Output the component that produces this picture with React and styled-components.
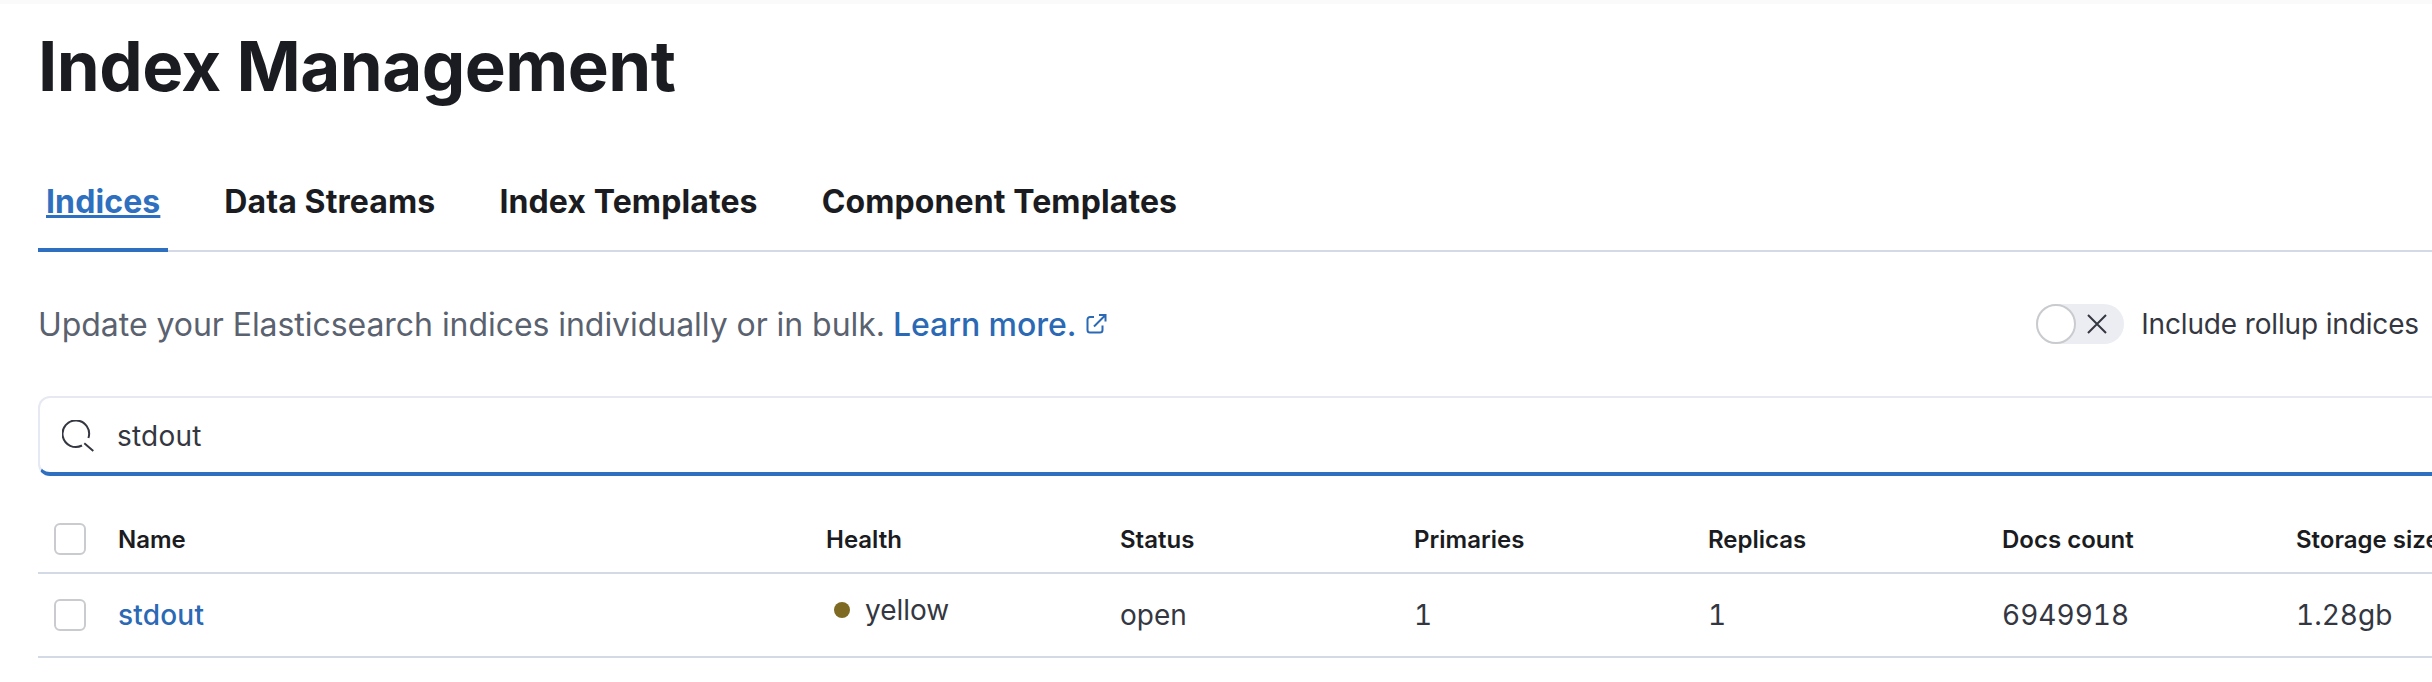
import React from "react";
import styled, { createGlobalStyle } from "styled-components";

const Global = createGlobalStyle`
  html, body { margin: 0; padding: 0; background: #fff; overflow: hidden; }
  body { font-family: Inter, "Liberation Sans", sans-serif; color: #343741; }
`;

const Page = styled.div`
  width: 2432px;
  height: 682px;
  box-sizing: border-box;
  overflow: hidden;
  padding-left: 38px;
  border-top: 4px solid #fafafa;
`;

const Title = styled.h1`
  margin: 0;
  height: 128px;
  box-sizing: border-box;
  padding-top: 22px;
  font-size: 69px;
  line-height: 80px;
  font-weight: 700;
  color: #1a1c21;
  letter-spacing: -0.55px;
`;

const Tabs = styled.div`
  display: flex;
  width: 2394px;
  height: 120px;
  box-sizing: border-box;
  align-items: flex-end;
  border-bottom: 2px solid #d3dae6;
`;

const Tab = styled.a`
  display: block;
  box-sizing: border-box;
  height: 74px;
  padding: 0 8px;
  margin-right: 48px;
  margin-bottom: -2px;
  font-size: 32px;
  line-height: 48px;
  font-weight: 700;
  letter-spacing: 0.11px;
  color: ${(p) => (p.$active ? "#2e6fc0" : "#1a1c21")};
  text-decoration: ${(p) => (p.$active ? "underline" : "none")};
  border-bottom: ${(p) => (p.$active ? "4px solid #2e6fc0" : "none")};
`;

const Intro = styled.div`
  display: flex;
  align-items: center;
  justify-content: space-between;
  width: 2394px;
  height: 144px;
`;

const Lead = styled.p`
  margin: 0;
  font-size: 32px;
  letter-spacing: -0.05px;
  color: #5a6270;
  display: flex;
  align-items: center;
`;

const LearnMore = styled.a`
  color: #2b69b5;
  margin-left: 8px;
  font-weight: 500;
`;

const External = styled.svg`
  width: 24px;
  height: 24px;
  margin-left: 8px;
  color: #2b69b5;
`;

const SwitchWrap = styled.label`
  display: flex;
  align-items: center;
  gap: 17px;
  margin-right: 13px;
  font-size: 28px;
  letter-spacing: -0.15px;
  color: #343741;
`;

const Track = styled.span`
  position: relative;
  display: flex;
  align-items: center;
  justify-content: flex-end;
  width: 88px;
  height: 40px;
  padding-right: 15px;
  box-sizing: border-box;
  border-radius: 20px;
  background: #ebedf2;
`;

const Thumb = styled.span`
  position: absolute;
  left: 0;
  top: 0;
  width: 40px;
  height: 40px;
  box-sizing: border-box;
  border-radius: 50%;
  background: #fff;
  border: 2px solid #c9cbcf;
`;

const Search = styled.div`
  display: flex;
  align-items: center;
  gap: 23px;
  width: 2420px;
  height: 80px;
  box-sizing: border-box;
  padding: 2px 0 0 22px;
  background: #fff;
  border: 2px solid #e6e9f2;
  border-bottom: 4px solid #2e6fc0;
  border-radius: 12px 0 0 12px;
  font-size: 28px;
  letter-spacing: 0.2px;
  color: #343741;
`;

const TableWrap = styled.div`
  width: 2394px;
  margin-top: 30px;
`;

const Row = styled.div`
  display: grid;
  grid-template-columns: 16px 32px 32px 708px repeat(6, 294px);
  align-items: center;
  height: ${(p) => p.$h}px;
  box-sizing: border-box;
  border-bottom: 2px solid #d3dae6;
`;

const Box = styled.span`
  grid-column: 2;
  width: 32px;
  height: 32px;
  box-sizing: border-box;
  border: 2px solid #c9cbcf;
  border-radius: 6px;
  background: #fff;
`;

const Head = styled.span`
  font-size: 24px;
  font-weight: 600;
  color: #1a1c21;
  white-space: nowrap;
`;

const Cell = styled.span`
  font-size: 28px;
  color: #343741;
  white-space: nowrap;
  font-variant-numeric: tabular-nums;
`;

const NameLink = styled(Cell)`
  font-weight: 500;
  letter-spacing: 0.2px;
  color: #2b69b5;
`;

const Health = styled.span`
  display: flex;
  align-items: center;
  gap: 15px;
  padding-left: 8px;
  margin-top: -10px;
  font-size: 28px;
  color: #343741;
`;

const Dot = styled.span`
  width: 16px;
  height: 16px;
  border-radius: 50%;
  background: #7f6a23;
`;

const Spacer = styled.span``;

export default function App() {
  return (
    <Page>
      <Global />
      <Title>Index Management</Title>
      <Tabs>
        <Tab $active>Indices</Tab>
        <Tab>Data Streams</Tab>
        <Tab>Index Templates</Tab>
        <Tab>Component Templates</Tab>
      </Tabs>
      <Intro>
        <Lead>
          Update your Elasticsearch indices individually or in bulk.
          <LearnMore>Learn more.</LearnMore>
          <External viewBox="0 0 24 24" fill="none" stroke="currentColor" strokeWidth="2">
            <path d="M10 5H6a2.500 2.500 0 0 0-2.500 2.500V18A2.500 2.500 0 0 0 6 20.500h10a2.500 2.500 0 0 0 2.500-2.500v-4.500" />
            <path d="M10 14.500 21.500 3M15 3h6.500v6.500" />
          </External>
        </Lead>
        <SwitchWrap>
          <Track>
            <Thumb />
            <svg width="24" height="24" viewBox="0 0 24 24" fill="none" stroke="#343741" strokeWidth="2">
              <path d="M3 3l18 18M21 3L3 21" />
            </svg>
          </Track>
          Include rollup indices
        </SwitchWrap>
      </Intro>
      <Search>
        <svg width="32" height="32" viewBox="0 0 32 32" fill="none" stroke="#343741" strokeWidth="2">
          <path d="M26.400 18A13.300 13.300 0 1 0 20 25.500M22.300 23.300l9 7.700" />
        </svg>
        stdout
      </Search>
      <TableWrap>
        <Row $h={68}>
          <Box />
          <Spacer />
          <Head>Name</Head>
          <Head>Health</Head>
          <Head>Status</Head>
          <Head>Primaries</Head>
          <Head>Replicas</Head>
          <Head>Docs count</Head>
          <Head>Storage size</Head>
        </Row>
        <Row $h={84}>
          <Box />
          <Spacer />
          <NameLink>stdout</NameLink>
          <Health><Dot />yellow</Health>
          <Cell>open</Cell>
          <Cell>1</Cell>
          <Cell>1</Cell>
          <Cell>6949918</Cell>
          <Cell>1.28gb</Cell>
        </Row>
      </TableWrap>
    </Page>
  );
}
